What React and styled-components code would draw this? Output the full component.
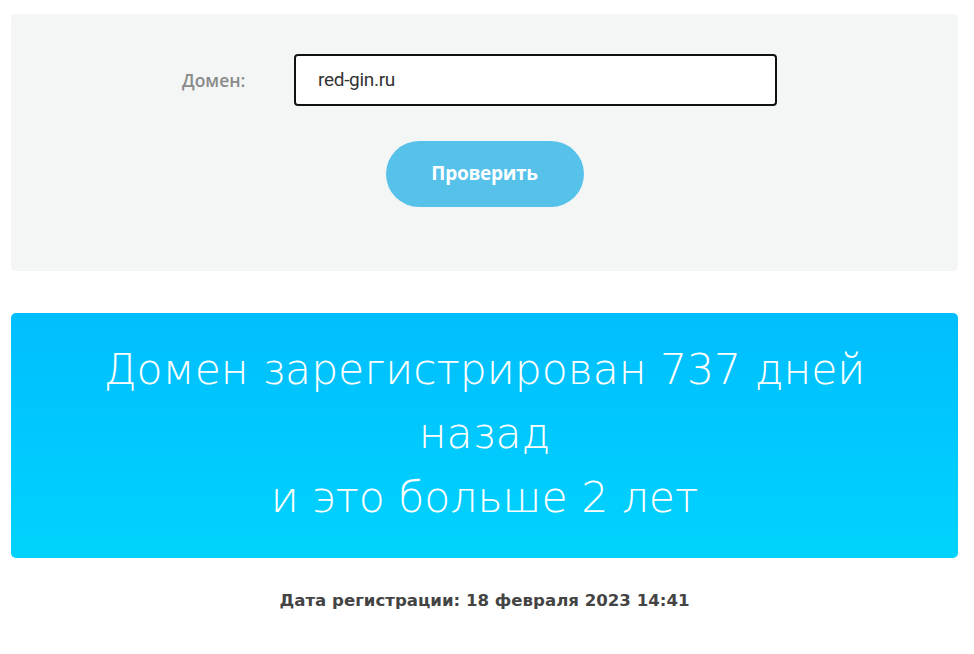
import styled, { createGlobalStyle } from "styled-components";

const GlobalStyle = createGlobalStyle`
  html, body {
    margin: 0;
    background: #ffffff;
  }
  body {
    font-family: "DejaVu Sans", "Noto Sans", sans-serif;
  }
`;

const Page = styled.div`
  padding: 14px 16px 0 11px;
  display: flex;
  flex-direction: column;
`;

const CheckForm = styled.form`
  background: #f4f6f5;
  border-radius: 4px;
  height: 257px;
  box-sizing: border-box;
  padding-top: 40px;
  display: flex;
  flex-direction: column;
  align-items: center;
`;

const FieldRow = styled.div`
  display: flex;
  align-items: center;
  margin-right: 10px;
`;

const Label = styled.label`
  width: 112px;
  font-family: "Open Sans", sans-serif;
  font-size: 17.5px;
  font-weight: 600;
  color: #8a8a8a;
`;

const DomainInput = styled.input`
  width: 483px;
  height: 52px;
  box-sizing: border-box;
  border: 2px solid #111;
  border-radius: 4px;
  background: #fff;
  padding: 0 22px 2px;
  font-family: Roboto, sans-serif;
  font-size: 19px;
  letter-spacing: -0.3px;
  color: #333;
  outline: none;
`;

const SubmitButton = styled.button`
  margin-top: 35px;
  width: 198px;
  height: 66px;
  border: none;
  border-radius: 33px;
  background: #56c2ea;
  color: #fff;
  font-family: "Open Sans", sans-serif;
  font-weight: 700;
  font-size: 19px;
  letter-spacing: -0.3px;
  padding-bottom: 4px;
  cursor: pointer;
`;

const ResultBox = styled.div`
  margin-top: 42px;
  height: 245px;
  border-radius: 5px;
  background: linear-gradient(180deg, #00befe 0%, #00d3fd 100%);
  color: #fff;
  display: flex;
  align-items: center;
  justify-content: center;
  text-align: center;
`;

const ResultText = styled.p`
  margin: 0 0 4px;
  width: 820px;
  font-family: "DejaVu Sans", sans-serif;
  font-weight: 200;
  font-size: 42.5px;
  line-height: 64px;
`;

const RegDate = styled.p`
  margin: 33px 0 0;
  text-align: center;
  font-family: "DejaVu Sans", sans-serif;
  font-weight: 700;
  font-size: 16.6px;
  color: #444;
`;

export default function App() {
  return (
    <>
      <GlobalStyle />
      <Page>
        <CheckForm onSubmit={(e) => e.preventDefault()}>
          <FieldRow>
            <Label htmlFor="domain">Домен:</Label>
            <DomainInput id="domain" defaultValue="red-gin.ru" />
          </FieldRow>
          <SubmitButton type="submit">Проверить</SubmitButton>
        </CheckForm>
        <ResultBox>
          <ResultText>
            Домен зарегистрирован 737 дней назад
            <br />и это больше 2 лет
          </ResultText>
        </ResultBox>
        <RegDate>Дата регистрации: 18 февраля 2023 14:41</RegDate>
      </Page>
    </>
  );
}
